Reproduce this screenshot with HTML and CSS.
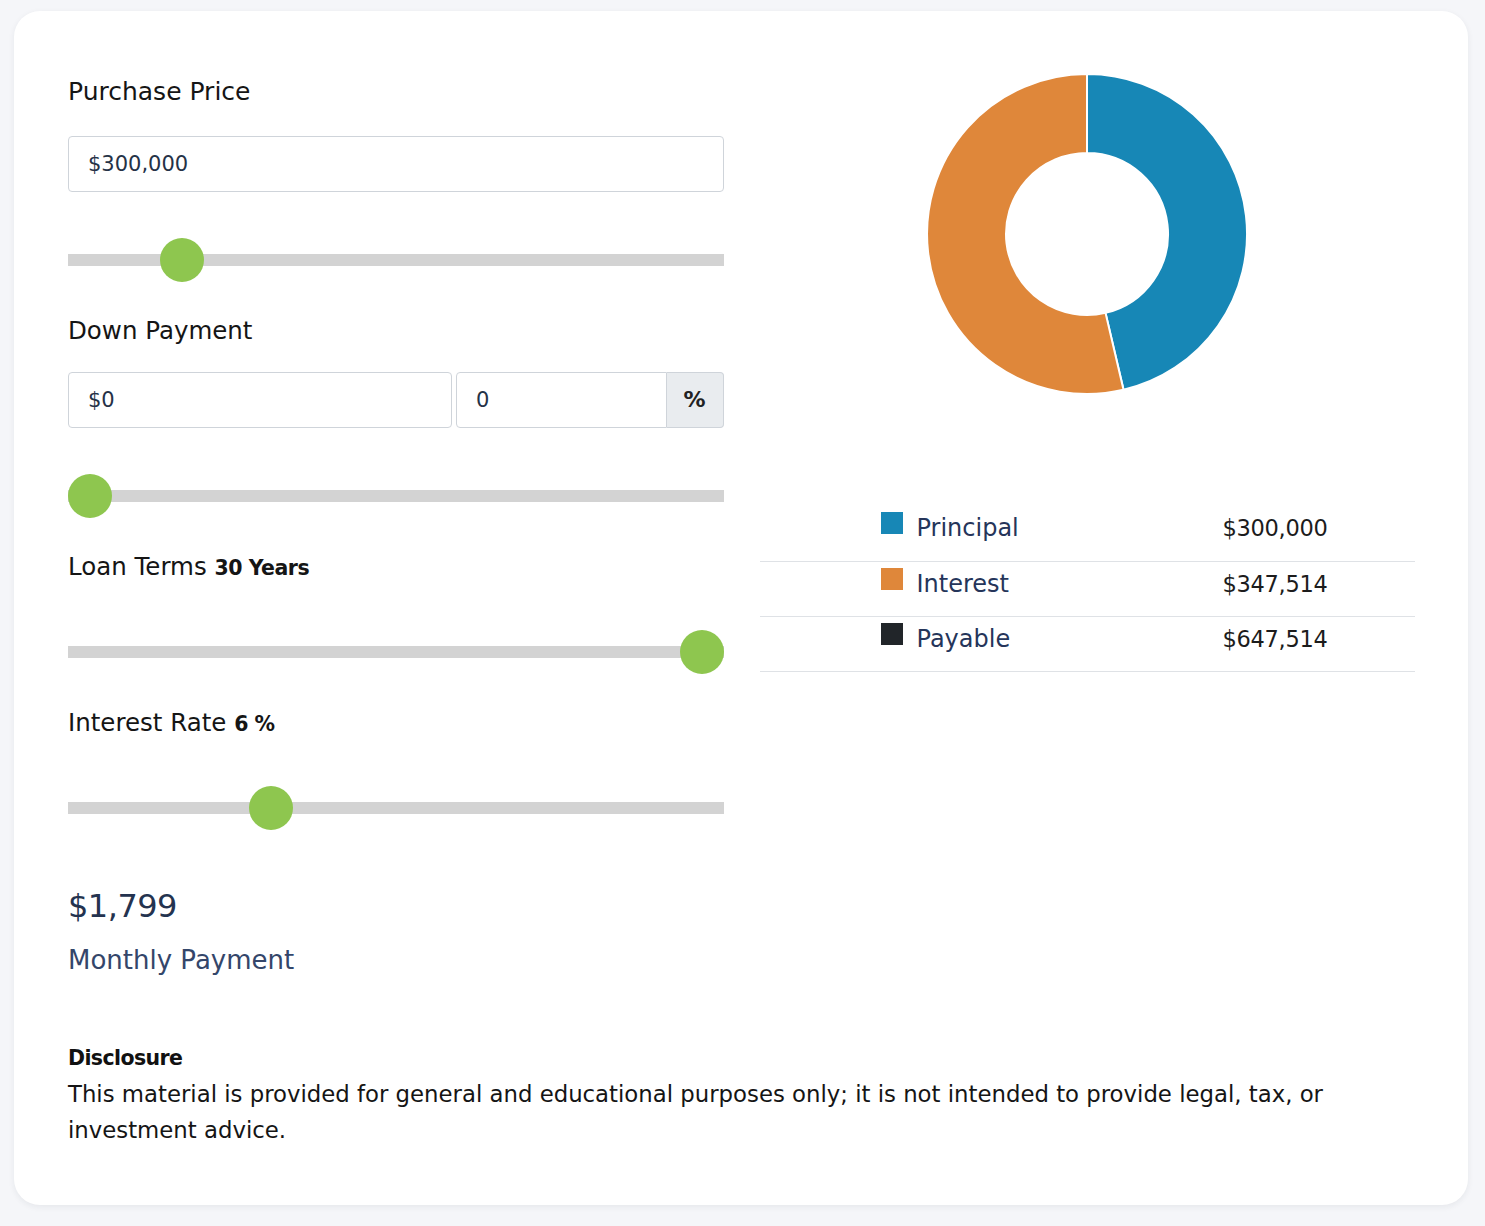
FILE: index.html
```html
<!DOCTYPE html>
<html lang="en">
<head>
<meta charset="utf-8">
<title>Mortgage Calculator</title>
<link rel="stylesheet" href="styles.css">
</head>
<body>
<div class="page">
  <section class="card">
    <div class="calc">
      <div class="inputs-col">
        <div class="label label-first">Purchase Price</div>
        <div class="field field-full">$300,000</div>
        <input class="range" type="range" min="0" max="2000000" value="300000">

        <div class="label label-dp">Down Payment</div>
        <div class="field-row">
          <div class="field field-amount">$0</div>
          <div class="input-group">
            <div class="field field-pct">0</div>
            <div class="addon">%</div>
          </div>
        </div>
        <input class="range" type="range" min="0" max="100" value="0">

        <div class="label">Loan Terms <b>30 Years</b></div>
        <input class="range range-loose" type="range" min="1" max="30" value="30">

        <div class="label">Interest Rate <b>6 %</b></div>
        <input class="range range-loose" type="range" min="0" max="20.3" step="0.1" value="6">

        <div class="amount">$1,799</div>
        <div class="amount-caption">Monthly Payment</div>
      </div>

      <div class="chart-col">
        <svg class="donut" width="322" height="322" viewBox="0 0 322 322">
          <path class="seg-principal" d="M161 1 A160 160 0 0 1 197.54 316.78 L179.5 239.86 A81 81 0 0 0 161 80 Z"/>
          <path class="seg-interest" d="M197.54 316.78 A160 160 0 1 1 161 1 L161 80 A81 81 0 1 0 179.5 239.86 Z"/>
        </svg>

        <div class="legend">
          <div class="legend-row">
            <span class="swatch swatch-principal"></span>
            <span class="legend-name">Principal</span>
            <span class="legend-value">$300,000</span>
          </div>
          <div class="legend-row">
            <span class="swatch swatch-interest"></span>
            <span class="legend-name">Interest</span>
            <span class="legend-value">$347,514</span>
          </div>
          <div class="legend-row">
            <span class="swatch swatch-payable"></span>
            <span class="legend-name">Payable</span>
            <span class="legend-value">$647,514</span>
          </div>
        </div>
      </div>
    </div>

    <div class="disclosure">
      <div class="disclosure-title">Disclosure</div>
      <p class="disclosure-text">This material is provided for general and educational purposes only; it is not intended to provide legal, tax, or investment advice.</p>
    </div>
  </section>
</div>
</body>
</html>
```

FILE: styles.css
```css
* {
  box-sizing: border-box;
}

html, body {
  margin: 0;
  padding: 0;
  background: #f5f6f9;
}

body {
  font-family: "DejaVu Sans", "Open Sans", sans-serif;
  color: #151515;
}

.page {
  padding: 11px 17px 21px 14px;
}

.card {
  background: #ffffff;
  border-radius: 26px;
  box-shadow: 0 2px 6px rgba(30, 40, 60, 0.07);
  padding: 62.5px 53px 57.5px 54px;
}

.calc {
  display: grid;
  grid-template-columns: 1fr 1fr;
  column-gap: 36px;
}

.inputs-col {
  display: flex;
  flex-direction: column;
}

.label {
  font-size: 24.5px;
  line-height: 36px;
  height: 36px;
  margin-top: 30px;
  color: #151515;
  white-space: nowrap;
}

.label b {
  font-weight: bold;
  font-size: 20.5px;
  letter-spacing: -0.5px;
}

.label-first {
  margin-top: 0;
  margin-bottom: 26px;
  font-size: 25px;
}

.label-dp {
  margin-bottom: 23px;
}

.field {
  height: 56px;
  border: 1px solid #cfd4da;
  border-radius: 4px;
  padding: 0 19px;
  display: flex;
  align-items: center;
  font-size: 21px;
  color: #253247;
  background: #fff;
}

.field-row {
  display: flex;
  gap: 4px;
}

.field-amount {
  width: 384px;
}

.input-group {
  flex: 1;
  display: flex;
}

.field-pct {
  flex: 1;
  border-radius: 4px 0 0 4px;
}

.addon {
  width: 57px;
  height: 56px;
  border: 1px solid #cfd4da;
  border-left: none;
  border-radius: 0 4px 4px 0;
  background: #e9ecef;
  display: flex;
  align-items: center;
  justify-content: center;
  font-size: 22px;
  font-weight: bold;
  color: #222;
}

.range {
  -webkit-appearance: none;
  appearance: none;
  display: block;
  width: 100%;
  height: 46px;
  margin: 45px 0 0 0;
  padding: 0;
  background: transparent;
  outline: none;
}

.range-loose {
  margin-top: 44px;
}

.range::-webkit-slider-runnable-track {
  height: 12px;
  background: #d3d3d3;
  border: none;
}

.range::-webkit-slider-thumb {
  -webkit-appearance: none;
  appearance: none;
  width: 44px;
  height: 44px;
  border-radius: 50%;
  background: #8ec64f;
  border: none;
  margin-top: -16px;
}

.amount {
  margin-top: 55px;
  font-size: 32px;
  line-height: 40px;
  height: 40px;
  color: #24334f;
  letter-spacing: -0.5px;
}

.amount-caption {
  margin-top: 16px;
  font-size: 26px;
  line-height: 36px;
  height: 36px;
  color: #34466a;
}

.chart-col {
  display: flex;
  flex-direction: column;
  align-items: center;
}

.donut {
  display: block;
  margin-top: -0.5px;
}

.donut path {
  stroke: #ffffff;
  stroke-width: 2;
}

.seg-principal {
  fill: #1787b6;
}

.seg-interest {
  fill: #df873a;
}

.legend {
  align-self: stretch;
  margin-top: 110.5px;
  border-bottom: 1px solid #dfe2e6;
}

.legend-row {
  display: flex;
  align-items: flex-start;
  height: 55px;
  padding: 6px 0 0 121px;
}

.legend-row + .legend-row {
  border-top: 1px solid #dfe2e6;
}

.swatch {
  width: 22px;
  height: 22px;
  flex: none;
}

.swatch-principal {
  background: #1787b6;
}

.swatch-interest {
  background: #df873a;
}

.swatch-payable {
  background: #212529;
}

.legend-name {
  width: 306px;
  margin-left: 14px;
  font-size: 24px;
  line-height: 30px;
  margin-top: 1px;
  color: #25355a;
}

.legend-value {
  font-size: 22.5px;
  line-height: 30px;
  margin-top: 1px;
  color: #1c1c1c;
  letter-spacing: -0.3px;
}

.disclosure {
  margin-top: 62px;
}

.disclosure-title {
  font-size: 20.5px;
  font-weight: bold;
  line-height: 36px;
  color: #111;
  letter-spacing: -0.6px;
}

.disclosure-text {
  margin: 0;
  font-size: 22.8px;
  line-height: 36px;
  color: #151515;
}
```
